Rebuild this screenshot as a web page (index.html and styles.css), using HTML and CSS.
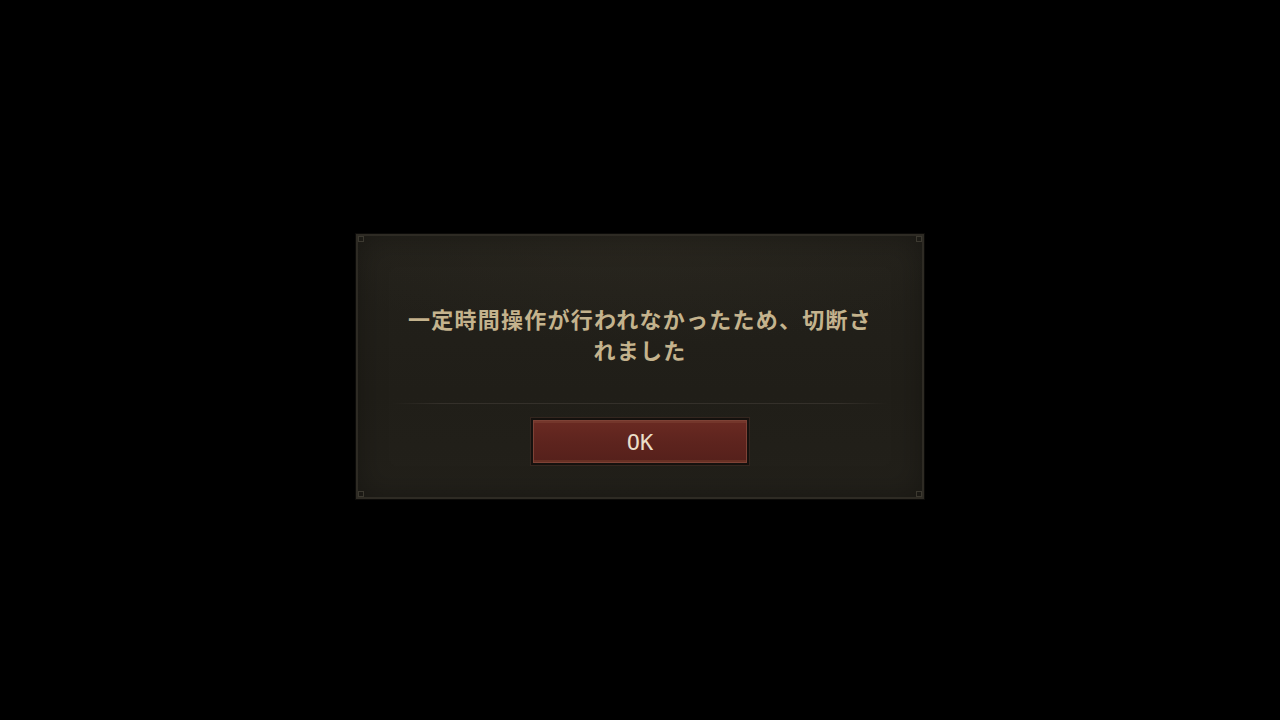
FILE: index.html
```html
<!DOCTYPE html>
<html lang="ja">
<head>
<meta charset="utf-8">
<link rel="stylesheet" href="styles.css">
</head>
<body>
<div class="screen">
  <div class="dialog">
    <span class="corner tl"></span><span class="corner tr"></span>
    <span class="corner bl"></span><span class="corner br"></span>
    <div class="message">一定時間操作が行われなかったため、切断さ<br>れました</div>
    <div class="divider"></div>
    <div class="actions">
      <button class="ok">OK</button>
    </div>
  </div>
</div>
</body>
</html>
```
FILE: styles.css
```css
html, body {
  margin: 0;
  padding: 0;
  background: #000;
  width: 1280px;
  height: 720px;
  overflow: hidden;
}
.screen {
  width: 1280px;
  height: 720px;
  display: flex;
  align-items: flex-start;
  justify-content: center;
  padding-top: 234px;
  box-sizing: border-box;
  background: #000;
}
.dialog {
  position: relative;
  width: 568px;
  height: 265px;
  box-sizing: border-box;
  border: 2px solid #2e2b24;
  background:
    radial-gradient(ellipse 340px 110px at 50% 0%, rgba(52,48,38,0.35) 0%, rgba(0,0,0,0) 100%),
    linear-gradient(180deg, #23211b 0%, #201e18 60%, #22201a 100%);
  box-shadow: 0 0 0 1px #0c0b09, inset 0 0 30px rgba(0,0,0,0.3);
  display: flex;
  flex-direction: column;
  align-items: center;
}
.corner {
  position: absolute;
  width: 4px;
  height: 4px;
  border: 1px solid #3c3930;
}
.corner.tl { top: 0; left: 0; }
.corner.tr { top: 0; right: 0; }
.corner.bl { bottom: 0; left: 0; }
.corner.br { bottom: 0; right: 0; }
.message {
  margin-top: 67px;
  font-family: "Noto Sans CJK JP", "Noto Sans", sans-serif;
  font-weight: 700;
  font-size: 22px;
  letter-spacing: 1.25px;
  line-height: 31px;
  color: #c4b38d;
  text-align: center;
}
.divider {
  margin-top: 38px;
  width: 496px;
  height: 1px;
  background: linear-gradient(90deg, rgba(52,48,40,0) 0%, #34302a 10%, #34302a 90%, rgba(52,48,40,0) 100%);
}
.actions {
  margin-top: 14px;
  display: flex;
  justify-content: center;
}
.ok {
  width: 218px;
  height: 47px;
  box-sizing: border-box;
  border: 2px solid #15110e;
  outline: 1px solid #33261f;
  background: linear-gradient(180deg, #6a2a22 0%, #5e241e 50%, #55201b 100%);
  box-shadow: inset 0 0 0 1px #7e4236, inset 0 3px 0 #74362b, inset 0 -3px 0 #683024;
  font-family: "DejaVu Sans Mono", "Liberation Mono", monospace;
  font-size: 22px;
  color: #eadfc9;
  padding: 0;
  padding-top: 1px;
  cursor: pointer;
}
```
